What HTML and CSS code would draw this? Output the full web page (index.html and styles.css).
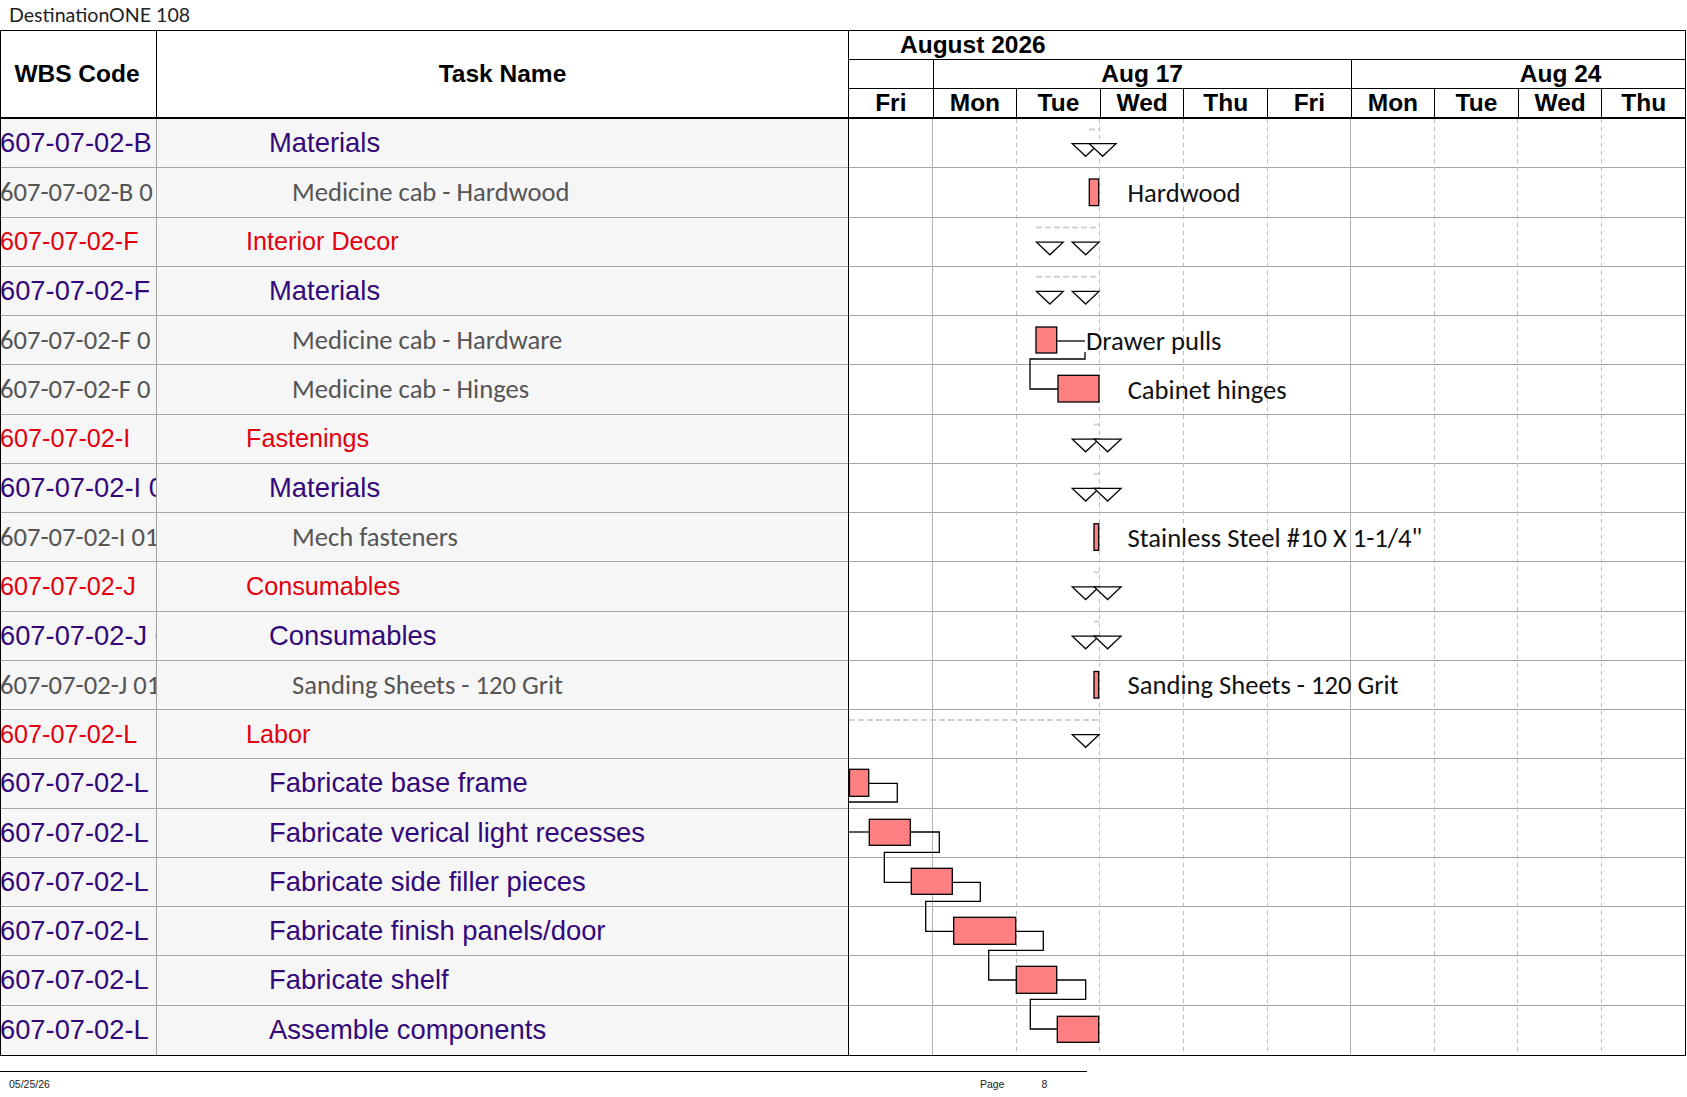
FILE: index.html
```html
<!DOCTYPE html>
<html lang="en">
<head>
<meta charset="utf-8">
<title>DestinationONE 108</title>
<link rel="stylesheet" href="styles.css">
</head>
<body>
<div class="doc-title">DestinationONE 108</div>
<div class="sheet">
  <div class="sheet-head">
    <div class="head-wbs">WBS Code</div>
    <div class="head-task">Task Name</div>
    <div class="head-chart">
      <div class="month-row"><span class="month-label">August 2026</span></div>
      <div class="week-row">
        <div class="week-cell"></div>
        <div class="week-cell">Aug 17</div>
        <div class="week-cell clip"><div class="week-inner">Aug 24</div></div>
      </div>
      <div class="day-row">
        <div class="day">Fri</div><div class="day">Mon</div><div class="day">Tue</div><div class="day">Wed</div><div class="day">Thu</div>
        <div class="day">Fri</div><div class="day">Mon</div><div class="day">Tue</div><div class="day">Wed</div><div class="day">Thu</div>
      </div>
    </div>
  </div>
  <div class="sheet-body">
    <div class="rows">
      <div class="row"><div class="wbs lv2">607-07-02-B</div><div class="task lv2">Materials</div></div>
      <div class="row"><div class="wbs lv3">607-07-02-B 0</div><div class="task lv3">Medicine cab - Hardwood</div></div>
      <div class="row"><div class="wbs lv1">607-07-02-F</div><div class="task lv1">Interior Decor</div></div>
      <div class="row"><div class="wbs lv2">607-07-02-F</div><div class="task lv2">Materials</div></div>
      <div class="row"><div class="wbs lv3">607-07-02-F 0</div><div class="task lv3">Medicine cab - Hardware</div></div>
      <div class="row"><div class="wbs lv3">607-07-02-F 0</div><div class="task lv3">Medicine cab - Hinges</div></div>
      <div class="row"><div class="wbs lv1">607-07-02-I</div><div class="task lv1">Fastenings</div></div>
      <div class="row"><div class="wbs lv2">607-07-02-I 01</div><div class="task lv2">Materials</div></div>
      <div class="row"><div class="wbs lv3">607-07-02-I 01</div><div class="task lv3">Mech fasteners</div></div>
      <div class="row"><div class="wbs lv1">607-07-02-J</div><div class="task lv1">Consumables</div></div>
      <div class="row"><div class="wbs lv2">607-07-02-J 01</div><div class="task lv2">Consumables</div></div>
      <div class="row"><div class="wbs lv3">607-07-02-J 01</div><div class="task lv3">Sanding Sheets - 120 Grit</div></div>
      <div class="row"><div class="wbs lv1">607-07-02-L</div><div class="task lv1">Labor</div></div>
      <div class="row"><div class="wbs lv2">607-07-02-L</div><div class="task lv2">Fabricate base frame</div></div>
      <div class="row"><div class="wbs lv2">607-07-02-L</div><div class="task lv2">Fabricate verical light recesses</div></div>
      <div class="row"><div class="wbs lv2">607-07-02-L</div><div class="task lv2">Fabricate side filler pieces</div></div>
      <div class="row"><div class="wbs lv2">607-07-02-L</div><div class="task lv2">Fabricate finish panels/door</div></div>
      <div class="row"><div class="wbs lv2">607-07-02-L</div><div class="task lv2">Fabricate shelf</div></div>
      <div class="row"><div class="wbs lv2">607-07-02-L</div><div class="task lv2">Assemble components</div></div>
    </div>
    <svg class="chart" width="836" height="935.75" viewBox="0 0 836 935.75" xmlns="http://www.w3.org/2000/svg">
      <g class="row-lines">
        <line x1="0" x2="836" y1="48.75" y2="48.75"/>
        <line x1="0" x2="836" y1="98" y2="98"/>
        <line x1="0" x2="836" y1="147.25" y2="147.25"/>
        <line x1="0" x2="836" y1="196.5" y2="196.5"/>
        <line x1="0" x2="836" y1="245.75" y2="245.75"/>
        <line x1="0" x2="836" y1="295" y2="295"/>
        <line x1="0" x2="836" y1="344.25" y2="344.25"/>
        <line x1="0" x2="836" y1="393.5" y2="393.5"/>
        <line x1="0" x2="836" y1="442.75" y2="442.75"/>
        <line x1="0" x2="836" y1="492" y2="492"/>
        <line x1="0" x2="836" y1="541.25" y2="541.25"/>
        <line x1="0" x2="836" y1="590.5" y2="590.5"/>
        <line x1="0" x2="836" y1="639.75" y2="639.75"/>
        <line x1="0" x2="836" y1="689" y2="689"/>
        <line x1="0" x2="836" y1="738.25" y2="738.25"/>
        <line x1="0" x2="836" y1="787.5" y2="787.5"/>
        <line x1="0" x2="836" y1="836.75" y2="836.75"/>
        <line x1="0" x2="836" y1="886" y2="886"/>
      </g>
      <g class="week-lines">
        <line x1="83.6" x2="83.6" y1="0" y2="936"/>
        <line x1="501.6" x2="501.6" y1="0" y2="936"/>
      </g>
      <g class="day-lines">
        <line x1="167.2" x2="167.2" y1="0" y2="936"/>
        <line x1="250.8" x2="250.8" y1="0" y2="936"/>
        <line x1="334.4" x2="334.4" y1="0" y2="936"/>
        <line x1="418" x2="418" y1="0" y2="936"/>
        <line x1="585.2" x2="585.2" y1="0" y2="936"/>
        <line x1="668.8" x2="668.8" y1="0" y2="936"/>
        <line x1="752.4" x2="752.4" y1="0" y2="936"/>
      </g>
      <g class="sum">
        <line x1="240" x2="250" y1="10.5" y2="10.5"/>
        <line x1="187" x2="250" y1="108.5" y2="108.5"/>
        <line x1="187" x2="250" y1="157.75" y2="157.75"/>
        <line x1="245" x2="250" y1="305.5" y2="305.5"/>
        <line x1="245" x2="250" y1="354.75" y2="354.75"/>
        <line x1="245" x2="250" y1="453.25" y2="453.25"/>
        <line x1="245" x2="250" y1="502.5" y2="502.5"/>
        <line x1="0" x2="250" y1="601" y2="601"/>
      </g>
      <g class="links">
        <polyline points="207.7,222 236,222"/>
        <polyline points="236,233 236,240 181,240 181,270 209,270"/>
        <polyline points="19.7,664.3 48.3,664.3 48.3,683 0,683"/>
        <polyline points="0,713 20.3,713"/>
        <polyline points="61.3,713 90.3,713 90.3,733.3 35.3,733.3 35.3,763.3 62.3,763.3"/>
        <polyline points="103.3,763.3 131.3,763.3 131.3,782.3 76.7,782.3 76.7,812.3 104.7,812.3"/>
        <polyline points="166.7,812.3 194.3,812.3 194.3,831.3 139.7,831.3 139.7,861 167.3,861"/>
        <polyline points="207.7,861 236.7,861 236.7,880.3 181.3,880.3 181.3,910 208.3,910"/>
      </g>
      <g class="tris">
        <polygon points="223.3,24.6 250,24.6 236.65,37.3"/>
        <polygon points="240.3,24.6 267,24.6 253.65,37.3"/>
        <polygon points="187.5,123.1 214.2,123.1 200.85,135.8"/>
        <polygon points="223.3,123.1 250,123.1 236.65,135.8"/>
        <polygon points="187.5,172.35 214.2,172.35 200.85,185.05"/>
        <polygon points="223.3,172.35 250,172.35 236.65,185.05"/>
        <polygon points="223.3,320.1 250,320.1 236.65,332.8"/>
        <polygon points="245.3,320.1 272,320.1 258.65,332.8"/>
        <polygon points="223.3,369.35 250,369.35 236.65,382.05"/>
        <polygon points="245.3,369.35 272,369.35 258.65,382.05"/>
        <polygon points="223.3,467.85 250,467.85 236.65,480.55"/>
        <polygon points="245.3,467.85 272,467.85 258.65,480.55"/>
        <polygon points="223.3,517.1 250,517.1 236.65,529.8"/>
        <polygon points="245.3,517.1 272,517.1 258.65,529.8"/>
        <polygon points="223.3,615.6 250,615.6 236.65,628.3"/>
      </g>
      <g class="bars">
        <rect x="240.3" y="60" width="9.4" height="26.6"/>
        <rect x="187" y="208" width="20.7" height="26"/>
        <rect x="209" y="256.3" width="41" height="26.7"/>
        <rect x="245" y="404.75" width="4.7" height="26.6"/>
        <rect x="245" y="552.5" width="4.7" height="26.6"/>
        <rect x="0.5" y="650.3" width="19.2" height="27"/>
        <rect x="20.3" y="700.3" width="41" height="26"/>
        <rect x="62.3" y="749.3" width="41" height="26"/>
        <rect x="104.7" y="798.3" width="62" height="27"/>
        <rect x="167.3" y="847.3" width="40.4" height="27"/>
        <rect x="208.3" y="897.3" width="41.4" height="26"/>
      </g>
      <g class="labels">
        <text x="278.5" y="73.85">Hardwood</text>
        <text x="237" y="221.6">Drawer pulls</text>
        <text x="278.7" y="270.85">Cabinet hinges</text>
        <text x="278.5" y="418.6">Stainless Steel #10 X 1-1/4"</text>
        <text x="278.5" y="566.35">Sanding Sheets - 120 Grit</text>
      </g>
    </svg>
  </div>
</div>
<div class="footer">
  <span class="foot-date">05/25/26</span>
  <span class="foot-page">Page</span>
  <span class="foot-num">8</span>
</div>
</body>
</html>
```

FILE: styles.css
```css
* { box-sizing: border-box; }

body {
  margin: 0;
  width: 1687px;
  background: #fff;
  font-family: "Liberation Sans", Arial, sans-serif;
}

.doc-title {
  height: 30px;
  padding-left: 9px;
  line-height: 30px;
  font-family: Lato, "Liberation Sans", sans-serif;
  font-size: 19.6px;
  color: #222;
}

.sheet {
  width: 1686px;
  border: 1px solid #000;
}

/* ---------- header ---------- */
.sheet-head {
  display: flex;
  height: 88px;
  border-bottom: 2px solid #000;
  font-weight: bold;
  font-size: 24.5px;
  color: #000;
}

.head-wbs {
  width: 156px;
  border-right: 1px solid #000;
  display: flex;
  align-items: center;
  justify-content: center;
  padding-right: 3px;
}

.head-task {
  width: 692px;
  border-right: 1px solid #000;
  display: flex;
  align-items: center;
  justify-content: center;
}

.head-chart {
  width: 836px;
  display: flex;
  flex-direction: column;
}

.month-row {
  height: 30px;
  border-bottom: 1px solid #000;
  display: flex;
  align-items: center;
  padding-left: 51px;
}

.week-row {
  height: 29px;
  border-bottom: 1px solid #000;
  display: grid;
  grid-template-columns: 1fr 5fr 4fr;
}

.week-cell {
  display: flex;
  align-items: center;
  justify-content: center;
  border-left: 1px solid #000;
  white-space: nowrap;
}

.week-cell:first-child { border-left: none; }

.week-cell.clip {
  overflow: hidden;
  justify-content: flex-start;
}

.week-inner {
  flex: none;
  width: 418px;
  text-align: center;
}

.day-row {
  flex: 1;
  display: grid;
  grid-template-columns: repeat(10, 1fr);
}

.day {
  display: flex;
  align-items: center;
  justify-content: center;
  border-left: 1px solid #000;
}

.day:first-child { border-left: none; }

/* ---------- body ---------- */
.sheet-body {
  display: flex;
}

.rows {
  width: 848px;
  border-right: 1px solid #000;
}

.row {
  display: flex;
  height: 49.25px;
  border-bottom: 1px solid #a6a6a6;
  background: #f6f6f6;
}

.row:last-child { border-bottom: none; }

.wbs {
  width: 156px;
  border-right: 1px solid #a0a0a0;
  overflow: hidden;
  white-space: nowrap;
  display: flex;
  align-items: center;
  text-indent: -1px;
}

.task {
  flex: 1;
  overflow: hidden;
  white-space: nowrap;
  display: flex;
  align-items: center;
}

.lv1 {
  color: #e2000f;
  font-family: "Liberation Sans", Arial, sans-serif;
  font-size: 25.2px;
}

.lv2 {
  color: #33087a;
  font-family: "Liberation Sans", Arial, sans-serif;
  font-size: 27.4px;
}

.lv3 {
  color: #555;
  font-family: Carlito, Lato, sans-serif;
  font-size: 26.6px;
}

.wbs.lv2 { font-size: 27.3px; }

.task.lv1 { padding-left: 89px; }
.task.lv2 { padding-left: 112px; }
.task.lv3 { padding-left: 135px; }

.chart {
  display: block;
  flex: none;
}

.row-lines line { stroke: #a6a6a6; stroke-width: 1; shape-rendering: crispEdges; }
.week-lines line { stroke: #b3b3b3; stroke-width: 1; shape-rendering: crispEdges; }
.day-lines line { stroke: #bdbdbd; stroke-width: 1; stroke-dasharray: 4 4; shape-rendering: crispEdges; }
.sum line { stroke: #d2d2d2; stroke-width: 2; stroke-dasharray: 6 3; }
.links polyline { fill: none; stroke: #000; stroke-width: 1.3; }
.tris polygon { fill: #fff; stroke: #000; stroke-width: 1.3; }
.bars rect { fill: #ff8080; stroke: #000; stroke-width: 1.3; }

.labels text {
  font-family: Carlito, Lato, sans-serif;
  font-size: 26.6px;
  fill: #111;
  dominant-baseline: central;
}

/* ---------- footer ---------- */
.footer {
  width: 1087px;
  margin-top: 15px;
  border-top: 1px solid #000;
  height: 26px;
  font-family: "Liberation Sans", Arial, sans-serif;
  font-size: 10.5px;
  color: #222;
  display: flex;
  align-items: center;
}

.foot-date { margin-left: 9px; }
.foot-page { margin-left: 930px; }
.foot-num { margin-left: 37px; }
```
